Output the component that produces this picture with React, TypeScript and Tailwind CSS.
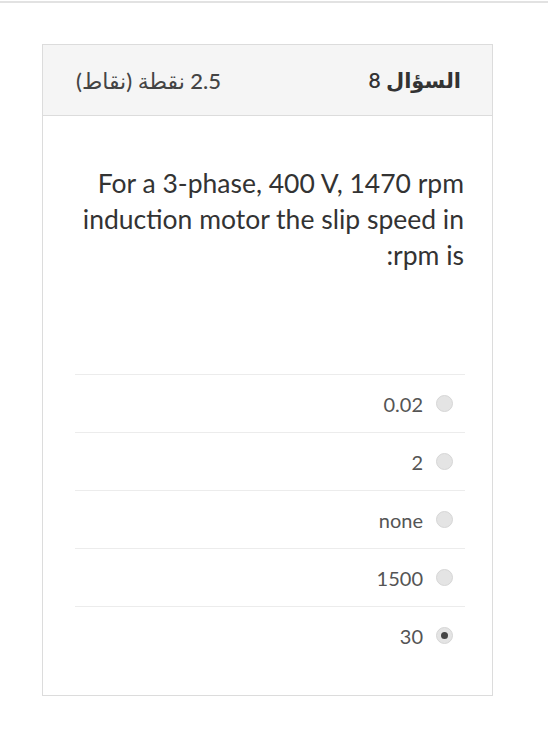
const options = [
  { label: '0.02', checked: false },
  { label: '2', checked: false },
  { label: 'none', checked: false },
  { label: '1500', checked: false },
  { label: '30', checked: true },
];

function Radio({ checked }: { checked: boolean }) {
  return (
    <span className="w-[17px] h-[17px] rounded-full bg-[#e4e4e4] border border-[#d6d6d6] flex items-center justify-center shrink-0">
      {checked && <span className="w-[7px] h-[7px] rounded-full bg-[#444]" />}
    </span>
  );
}

export default function App() {
  return (
    <div className="w-[548px] h-[729px] bg-white font-['Lato','DejaVu_Sans',sans-serif]">
      <div className="pt-[1px]">
        <div className="h-[2px] bg-[#e2e2e2]" />
      </div>

      <div className="ml-[42px] mt-[41px] w-[451px] border border-[#dcdcdc] bg-white">
        <div
          dir="rtl"
          className="h-[71px] bg-[#f5f5f5] border-b border-[#dcdcdc] flex items-center justify-between pr-[31px] pl-[33px] text-[#333]"
        >
          <span className="text-[21px] font-semibold">السؤال 8</span>
          <span className="text-[22px] font-medium text-[#444]">2.5 نقطة (نقاط)</span>
        </div>

        <div className="pt-[49px] pb-[31px]">
          <p
            dir="rtl"
            className="pr-[28px] pl-[34px] text-[26.5px] leading-[36px] text-[#333]"
          >
            For a 3-phase, 400 V, 1470 rpm induction motor the slip speed in rpm is:
          </p>

          <div className="mt-[101px] ml-[32px] mr-[27px]">
            {options.map((opt, i) => (
              <div
                key={i}
                dir="rtl"
                className="h-[58px] border-t border-[#ececec] flex items-center gap-[13px] pr-[12px] text-[20px] text-[#555]"
              >
                <Radio checked={opt.checked} />
                <span>{opt.label}</span>
              </div>
            ))}
          </div>
        </div>
      </div>
    </div>
  );
}
